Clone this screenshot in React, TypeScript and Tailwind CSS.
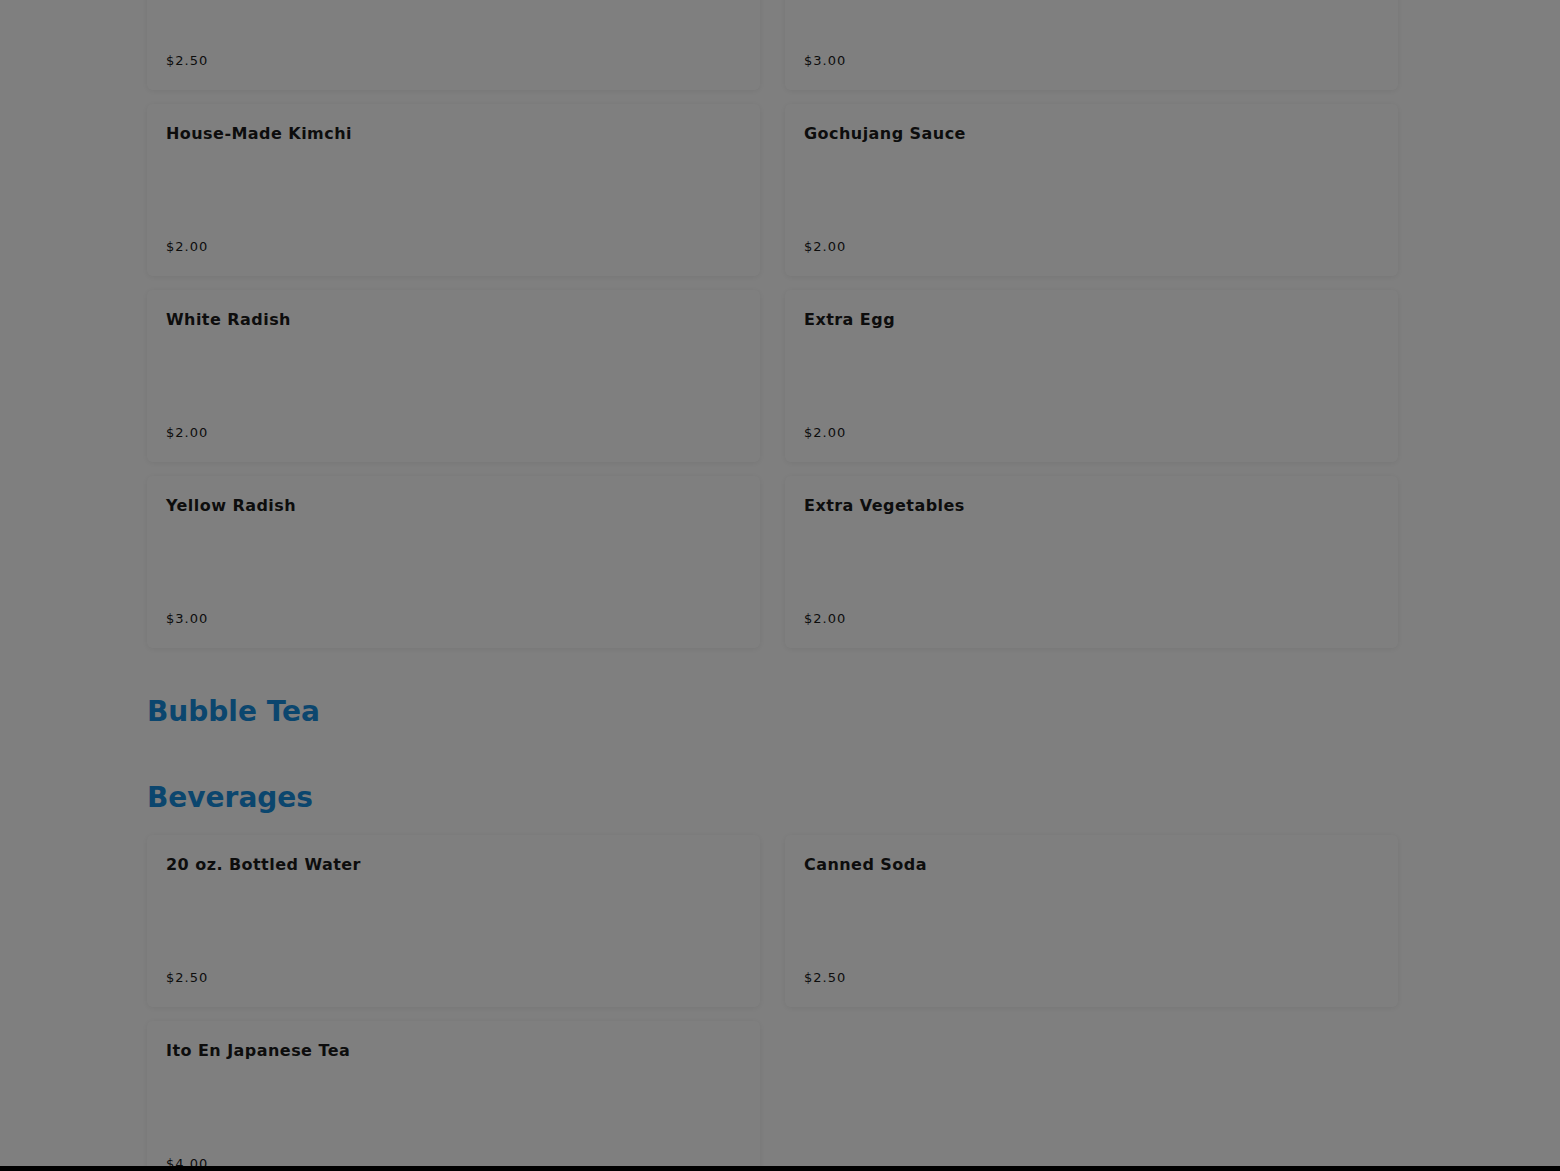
import React from 'react';

type Item = { name: string; price: string };

const sides: Item[] = [
    { name: 'Steamed Rice', price: '$2.50' },
    { name: 'Miso Soup', price: '$3.00' },
    { name: 'House-Made Kimchi', price: '$2.00' },
    { name: 'Gochujang Sauce', price: '$2.00' },
    { name: 'White Radish', price: '$2.00' },
    { name: 'Extra Egg', price: '$2.00' },
    { name: 'Yellow Radish', price: '$3.00' },
    { name: 'Extra Vegetables', price: '$2.00' },
];

const beverages: Item[] = [
    { name: '20 oz. Bottled Water', price: '$2.50' },
    { name: 'Canned Soda', price: '$2.50' },
    { name: 'Ito En Japanese Tea', price: '$4.00' },
];

function MenuCard({ item }: { item: Item }) {
    return (
        <div className="h-[172px] bg-white rounded-md shadow-[0_1px_6px_rgba(0,0,0,0.08)] px-[19px] pt-[19px] pb-[19px] flex flex-col justify-between">
            <h3 className="text-[16px] leading-[22px] font-bold tracking-[0.45px] text-[#1a1a1a]">{item.name}</h3>
            <p className="text-[13px] leading-[20px] tracking-[1px] text-[#1a1a1a]">{item.price}</p>
        </div>
    );
}

function Grid({ items }: { items: Item[] }) {
    return (
        <div className="grid grid-cols-2 gap-x-[25px] gap-y-[14px]">
            {items.map((item) => (
                <MenuCard key={item.name} item={item} />
            ))}
        </div>
    );
}

export default function App() {
    return (
        <div className="relative min-h-[1171px] bg-white overflow-hidden font-['DejaVu_Sans',sans-serif]">
            <div className="w-[1251px] ml-[147px] mt-[-82px]">
                {/* Sides */}
                <Grid items={sides} />

                {/* Bubble Tea (empty) */}
                <h2 className="mt-[46px] text-[28px] leading-[36px] font-bold text-[#168cdc]">
                    Bubble Tea
                </h2>

                {/* Beverages */}
                <h2 className="mt-[50px] mb-[19px] text-[28px] leading-[36px] font-bold text-[#168cdc]">
                    Beverages
                </h2>
                <Grid items={beverages} />
            </div>

            {/* Modal backdrop */}
            <div className="fixed inset-0 bg-black/50"></div>
            <div className="fixed left-0 right-0 bottom-0 h-[5px] bg-black"></div>
        </div>
    );
}
